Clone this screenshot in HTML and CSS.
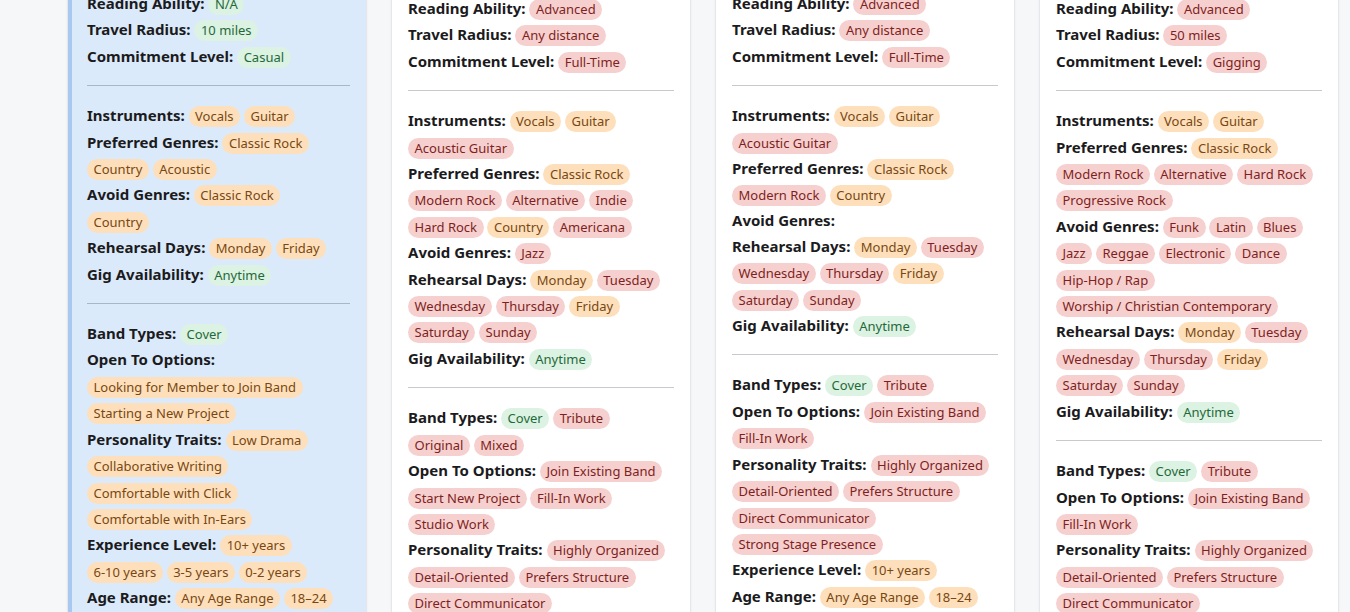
FILE: index.html
```html
<!DOCTYPE html>
<html lang="en">
<head>
<meta charset="utf-8">
<title>Musician Matches</title>
<link rel="stylesheet" href="styles.css">
</head>
<body>
<div class="board">

  <section class="card card--active">
    <div class="field"><span class="label">Reading Ability:</span> <span class="pill g">N/A</span></div>
    <div class="field"><span class="label">Travel Radius:</span> <span class="pill g">10 miles</span></div>
    <div class="field"><span class="label">Commitment Level:</span> <span class="pill g">Casual</span></div>
    <hr class="divider">
    <div class="field"><span class="label">Instruments:</span> <span class="pill o">Vocals</span> <span class="pill o">Guitar</span></div>
    <div class="field"><span class="label">Preferred Genres:</span> <span class="pill o">Classic Rock</span> <span class="pill o">Country</span> <span class="pill o">Acoustic</span></div>
    <div class="field"><span class="label">Avoid Genres:</span> <span class="pill o">Classic Rock</span> <span class="pill o">Country</span></div>
    <div class="field"><span class="label">Rehearsal Days:</span> <span class="pill o">Monday</span> <span class="pill o">Friday</span></div>
    <div class="field"><span class="label">Gig Availability:</span> <span class="pill g">Anytime</span></div>
    <hr class="divider">
    <div class="field"><span class="label">Band Types:</span> <span class="pill g">Cover</span></div>
    <div class="field"><span class="label">Open To Options:</span> <span class="pill o">Looking for Member to Join Band</span> <span class="pill o">Starting a New Project</span></div>
    <div class="field"><span class="label">Personality Traits:</span> <span class="pill o">Low Drama</span> <span class="pill o">Collaborative Writing</span> <span class="pill o">Comfortable with Click</span> <span class="pill o">Comfortable with In-Ears</span></div>
    <div class="field"><span class="label">Experience Level:</span> <span class="pill o">10+ years</span> <span class="pill o">6-10 years</span> <span class="pill o">3-5 years</span> <span class="pill o">0-2 years</span></div>
    <div class="field"><span class="label">Age Range:</span> <span class="pill o">Any Age Range</span> <span class="pill o">18–24</span> <span class="pill o">25–34</span> <span class="pill o">35–44</span> <span class="pill o">45–54</span> <span class="pill o">55–64</span> <span class="pill o">65+</span></div>
  </section>

  <section class="card card--low">
    <div class="field"><span class="label">Reading Ability:</span> <span class="pill r">Advanced</span></div>
    <div class="field"><span class="label">Travel Radius:</span> <span class="pill r">Any distance</span></div>
    <div class="field"><span class="label">Commitment Level:</span> <span class="pill r">Full-Time</span></div>
    <hr class="divider">
    <div class="field"><span class="label">Instruments:</span> <span class="pill o">Vocals</span> <span class="pill o">Guitar</span> <span class="pill r">Acoustic Guitar</span></div>
    <div class="field"><span class="label">Preferred Genres:</span> <span class="pill o">Classic Rock</span> <span class="pill r">Modern Rock</span> <span class="pill r">Alternative</span> <span class="pill r">Indie</span> <span class="pill r">Hard Rock</span> <span class="pill o">Country</span> <span class="pill r">Americana</span></div>
    <div class="field"><span class="label">Avoid Genres:</span> <span class="pill r">Jazz</span></div>
    <div class="field"><span class="label">Rehearsal Days:</span> <span class="pill o">Monday</span> <span class="pill r">Tuesday</span> <span class="pill r">Wednesday</span> <span class="pill r">Thursday</span> <span class="pill o">Friday</span> <span class="pill r">Saturday</span> <span class="pill r">Sunday</span></div>
    <div class="field"><span class="label">Gig Availability:</span> <span class="pill g">Anytime</span></div>
    <hr class="divider">
    <div class="field"><span class="label">Band Types:</span> <span class="pill g">Cover</span> <span class="pill r">Tribute</span> <span class="pill r">Original</span> <span class="pill r">Mixed</span></div>
    <div class="field"><span class="label">Open To Options:</span> <span class="pill r">Join Existing Band</span> <span class="pill r">Start New Project</span> <span class="pill r">Fill-In Work</span> <span class="pill r">Studio Work</span></div>
    <div class="field"><span class="label">Personality Traits:</span> <span class="pill r">Highly Organized</span> <span class="pill r">Detail-Oriented</span> <span class="pill r">Prefers Structure</span> <span class="pill r">Direct Communicator</span></div>
    <div class="field"><span class="label">Experience Level:</span> <span class="pill o">10+ years</span></div>
  </section>

  <section class="card">
    <div class="field"><span class="label">Reading Ability:</span> <span class="pill r">Advanced</span></div>
    <div class="field"><span class="label">Travel Radius:</span> <span class="pill r">Any distance</span></div>
    <div class="field"><span class="label">Commitment Level:</span> <span class="pill r">Full-Time</span></div>
    <hr class="divider">
    <div class="field"><span class="label">Instruments:</span> <span class="pill o">Vocals</span> <span class="pill o">Guitar</span> <span class="pill r">Acoustic Guitar</span></div>
    <div class="field"><span class="label">Preferred Genres:</span> <span class="pill o">Classic Rock</span> <span class="pill r">Modern Rock</span> <span class="pill o">Country</span></div>
    <div class="field field--empty"><span class="label">Avoid Genres:</span></div>
    <div class="field"><span class="label">Rehearsal Days:</span> <span class="pill o">Monday</span> <span class="pill r">Tuesday</span> <span class="pill r">Wednesday</span> <span class="pill r">Thursday</span> <span class="pill o">Friday</span> <span class="pill r">Saturday</span> <span class="pill r">Sunday</span></div>
    <div class="field"><span class="label">Gig Availability:</span> <span class="pill g">Anytime</span></div>
    <hr class="divider">
    <div class="field"><span class="label">Band Types:</span> <span class="pill g">Cover</span> <span class="pill r">Tribute</span></div>
    <div class="field"><span class="label">Open To Options:</span> <span class="pill r">Join Existing Band</span> <span class="pill r">Fill-In Work</span></div>
    <div class="field"><span class="label">Personality Traits:</span> <span class="pill r">Highly Organized</span> <span class="pill r">Detail-Oriented</span> <span class="pill r">Prefers Structure</span> <span class="pill r">Direct Communicator</span> <span class="pill r">Strong Stage Presence</span></div>
    <div class="field"><span class="label">Experience Level:</span> <span class="pill o">10+ years</span></div>
    <div class="field"><span class="label">Age Range:</span> <span class="pill o">Any Age Range</span> <span class="pill o">18–24</span> <span class="pill r">25–34</span> <span class="pill r">35–44</span></div>
  </section>

  <section class="card card--low">
    <div class="field"><span class="label">Reading Ability:</span> <span class="pill r">Advanced</span></div>
    <div class="field"><span class="label">Travel Radius:</span> <span class="pill r">50 miles</span></div>
    <div class="field"><span class="label">Commitment Level:</span> <span class="pill r">Gigging</span></div>
    <hr class="divider">
    <div class="field"><span class="label">Instruments:</span> <span class="pill o">Vocals</span> <span class="pill o">Guitar</span></div>
    <div class="field"><span class="label">Preferred Genres:</span> <span class="pill o">Classic Rock</span> <span class="pill r">Modern Rock</span> <span class="pill r">Alternative</span> <span class="pill r">Hard Rock</span> <span class="pill r">Progressive Rock</span></div>
    <div class="field"><span class="label">Avoid Genres:</span> <span class="pill r">Funk</span> <span class="pill r">Latin</span> <span class="pill r">Blues</span> <span class="pill r">Jazz</span> <span class="pill r">Reggae</span> <span class="pill r">Electronic</span> <span class="pill r">Dance</span> <span class="pill r">Hip-Hop / Rap</span> <span class="pill r">Worship / Christian Contemporary</span></div>
    <div class="field"><span class="label">Rehearsal Days:</span> <span class="pill o">Monday</span> <span class="pill r">Tuesday</span> <span class="pill r">Wednesday</span> <span class="pill r">Thursday</span> <span class="pill o">Friday</span> <span class="pill r">Saturday</span> <span class="pill r">Sunday</span></div>
    <div class="field"><span class="label">Gig Availability:</span> <span class="pill g">Anytime</span></div>
    <hr class="divider">
    <div class="field"><span class="label">Band Types:</span> <span class="pill g">Cover</span> <span class="pill r">Tribute</span></div>
    <div class="field"><span class="label">Open To Options:</span> <span class="pill r">Join Existing Band</span> <span class="pill r">Fill-In Work</span></div>
    <div class="field"><span class="label">Personality Traits:</span> <span class="pill r">Highly Organized</span> <span class="pill r">Detail-Oriented</span> <span class="pill r">Prefers Structure</span> <span class="pill r">Direct Communicator</span></div>
  </section>

</div>
</body>
</html>
```

FILE: styles.css
```css
html, body {
  margin: 0;
  padding: 0;
}

body {
  background: #f6f7f9;
  font-family: "Noto Sans", "Open Sans", sans-serif;
  color: #1b1b1d;
  overflow: hidden;
}

.board {
  display: flex;
  align-items: flex-start;
  gap: 26px;
  padding-left: 68px;
  margin-top: -10px;
}

.card {
  flex: none;
  width: 298px;
  box-sizing: border-box;
  background: #ffffff;
  padding: 0 16px 40px;
  box-shadow: 0 1px 3px rgba(20, 20, 40, 0.10), 0 0 0 1px rgba(20, 20, 40, 0.03);
}

.card--active {
  background: #dbeafa;
  border-left: 4px solid #a8c8f0;
  padding-left: 15px;
}

.card--active .field {
  padding-right: 6px;
}

.card--low {
  margin-top: 5px;
}

.field {
  font-size: 15px;
  line-height: 26.4px;
}

.field--empty {
  line-height: 25px;
}

.label {
  font-weight: 700;
}

.pill {
  display: inline-block;
  font-size: 13px;
  line-height: 19px;
  padding: 1px 6.5px;
  border-radius: 11px;
  white-space: nowrap;
}

.g {
  background: #dcf2e2;
  color: #1f6a3a;
}

.o {
  background: #fde0bb;
  color: #7a4712;
}

.r {
  background: #f6d0cf;
  color: #7e1f21;
}

.divider {
  border: 0;
  border-top: 1px solid #c9c9cd;
  margin: 16px 0;
  height: 0;
}

.card--active .divider {
  border-top-color: #a8b6c6;
}
```
